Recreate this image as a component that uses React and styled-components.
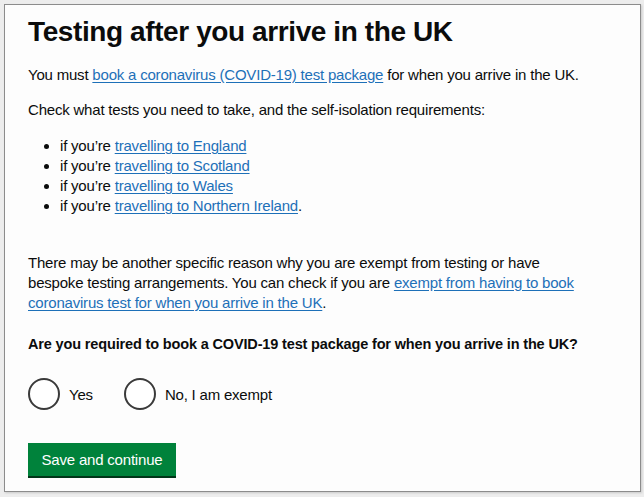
import React from 'react'
import styled, { createGlobalStyle } from 'styled-components'

const Global = createGlobalStyle`
  html, body {
    margin: 0;
    padding: 0;
    background: #ededed;
  }
  body {
    font-family: "Liberation Sans", Arial, sans-serif;
    color: #0b0c0c;
  }
`;

const Page = styled.div`
  padding: 4px 3px 5px 4px;
`;

const Card = styled.div`
  box-sizing: border-box;
  height: 488px;
  background: #fdfdfd;
  border: 1px solid #8c8c8c;
  box-shadow: 1px 1px 2px rgba(0, 0, 0, 0.15);
  padding: 10px 24px 0 23px;
`;

const Title = styled.h1`
  margin: 0;
  font-size: 28px;
  line-height: 34px;
  font-weight: 700;
  letter-spacing: -0.4px;
`;

const Para = styled.p`
  margin: ${p => p.$top || 0}px 0 0;
  max-width: 558px;
  font-size: 15px;
  line-height: 20px;
  letter-spacing: -0.2px;
`;

const Link = styled.a`
  color: #1d70b8;
  text-decoration: underline;
  text-underline-offset: 2px;
`;

const List = styled.ul`
  margin: 16px 0 0;
  padding-left: 32px;
  font-size: 15px;
  line-height: 20px;
  letter-spacing: -0.2px;
`;

const Question = styled.h2`
  margin: 21px 0 0;
  font-size: 14.5px;
  line-height: 20px;
  font-weight: 700;
  letter-spacing: -0.15px;
`;

const Radios = styled.div`
  display: flex;
  align-items: center;
  gap: 31px;
  margin-top: 24px;
`;

const RadioItem = styled.label`
  display: flex;
  align-items: center;
  gap: 9px;
  font-size: 15px;
  letter-spacing: -0.2px;
`;

const Circle = styled.span`
  box-sizing: border-box;
  width: 32px;
  height: 32px;
  border: 2px solid #3a3a3a;
  border-radius: 50%;
  background: #fff;
`;

const Button = styled.button`
  margin-top: 33px;
  width: 148px;
  height: 33px;
  border: none;
  background: #00823b;
  box-shadow: 0 2px 0 #003618;
  color: #fff;
  font-family: "Liberation Sans", Arial, sans-serif;
  font-size: 15px;
  letter-spacing: -0.2px;
  padding: 0;
`;

export default function App() {
  return (
    <Page>
      <Global />
      <Card>
        <Title>Testing after you arrive in the UK</Title>
        <Para $top={16}>
          You must <Link href="#">book a coronavirus (COVID-19) test package</Link> for when you arrive in the UK.
        </Para>
        <Para $top={15}>
          Check what tests you need to take, and the self-isolation requirements:
        </Para>
        <List>
          <li>if you’re <Link href="#">travelling to England</Link></li>
          <li>if you’re <Link href="#">travelling to Scotland</Link></li>
          <li>if you’re <Link href="#">travelling to Wales</Link></li>
          <li>if you’re <Link href="#">travelling to Northern Ireland</Link>.</li>
        </List>
        <Para $top={37}>
          There may be another specific reason why you are exempt from testing or have
          bespoke testing arrangements. You can check if you are{' '}
          <Link href="#">exempt from having to book coronavirus test for when you arrive in the UK</Link>.
        </Para>
        <Question>Are you required to book a COVID-19 test package for when you arrive in the UK?</Question>
        <Radios>
          <RadioItem><Circle />Yes</RadioItem>
          <RadioItem><Circle />No, I am exempt</RadioItem>
        </Radios>
        <Button>Save and continue</Button>
      </Card>
    </Page>
  )
}
